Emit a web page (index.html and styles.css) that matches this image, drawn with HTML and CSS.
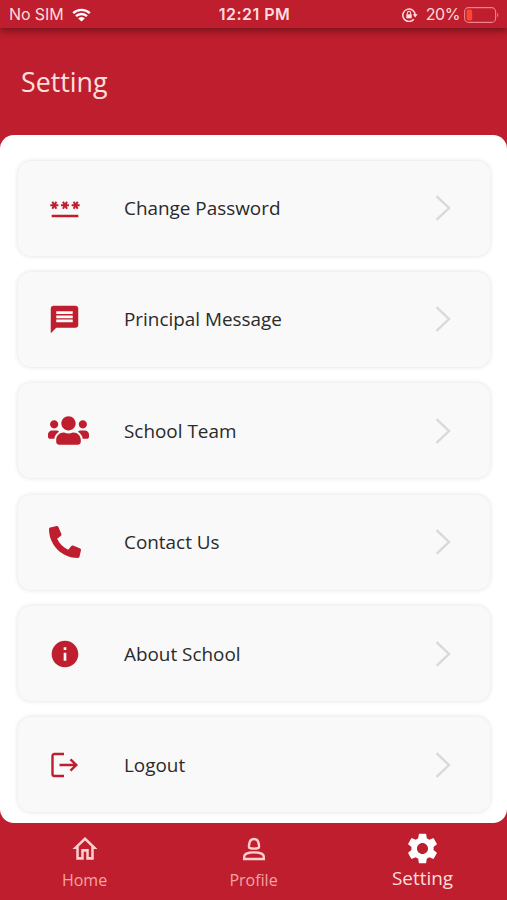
FILE: index.html
```html
<!DOCTYPE html>
<html lang="en">
<head>
    <meta charset="UTF-8">
    <title>Setting</title>
    <link rel="stylesheet" href="styles.css">
</head>
<body>
    <!-- Status bar -->
    <div class="status-bar">
        <div class="status-left">
            <span>No SIM</span>
            <svg class="wifi" viewBox="0 0 19 14">
                <path d="M1.2 5.2a12 12 0 0 1 16.6 0M4 8.2a8 8 0 0 1 11 0" fill="none" stroke="currentColor" stroke-width="2.4"/>
                <path d="M9.5 13.6L6.2 10.4a5 5 0 0 1 6.6 0z" fill="currentColor"/>
            </svg>
        </div>
        <span class="status-time">12:21 PM</span>
        <div class="status-right">
            <svg class="lock" viewBox="0 0 16 14">
                <path d="M11.8 11.200A6.200 6.200 0 1 1 13.200 7" fill="none" stroke="currentColor" stroke-width="1.5"/>
                <path d="M10.800 6.200h4.800L13.200 9.400z" fill="currentColor"/>
                <path d="M4.300 6.300h5.400v4H4.300z" fill="currentColor"/>
                <path d="M5.400 6.500V5a1.600 1.600 0 0 1 3.200 0v1.500" fill="none" stroke="currentColor" stroke-width="1.100"/>
            </svg>
            <span class="percent">20%</span>
            <svg class="battery" viewBox="0 0 36 16">
                <rect x="0.6" y="0.6" width="31" height="14.8" rx="4" fill="none" stroke="#e8848a" stroke-width="1.1"/>
                <rect x="2.6" y="2.6" width="5.6" height="10.8" rx="1.6" fill="#ff4534"/>
                <path d="M33.2 5.4q2.2 2.6 0 5.2z" fill="#e8848a"/>
            </svg>
        </div>
    </div>

    <header class="header">
        <h1>Setting</h1>
    </header>

    <!-- Menu -->
    <main class="panel">
        <a class="card">
            <span class="card-icon">
                <svg width="32" height="32" viewBox="0 0 24 24"><path d="M2 17h20v2H2zM3.15 12.95L4 11.47l.85 1.48 1.3-.75-.85-1.48H7v-1.5H5.3l.85-1.47L4.85 7 4 8.47 3.15 7l-1.3.75.85 1.47H1v1.5h1.7l-.85 1.48zM9.85 12.2l1.3.75.85-1.48.85 1.48 1.3-.75-.85-1.48H15v-1.5h-1.7l.85-1.47-1.3-.75L12 8.47 11.15 7l-1.3.75.85 1.47H9v1.5h1.7zM23 9.22h-1.7l.85-1.47-1.3-.75L20 8.47 19.15 7l-1.3.75.85 1.47H17v1.5h1.7l-.85 1.48 1.3.75.85-1.48.85 1.48 1.3-.75-.85-1.48H23z"/></svg>
            </span>
            <span class="card-label">Change Password</span>
            <svg class="chevron" viewBox="0 0 16 26"><path d="M1.5 1.2L14 13 1.5 24.8"/></svg>
        </a>
        <a class="card">
            <span class="card-icon">
                <svg width="33" height="33" viewBox="0 0 24 24"><path d="M20 2H4c-1.1 0-1.99.9-1.99 2L2 22l4-4h14c1.1 0 2-.9 2-2V4c0-1.1-.9-2-2-2zM6 9h12v2H6V9zm12 5H6v-2h12v2zm0-6H6V6h12v2z"/></svg>
            </span>
            <span class="card-label">Principal Message</span>
            <svg class="chevron" viewBox="0 0 16 26"><path d="M1.5 1.2L14 13 1.5 24.8"/></svg>
        </a>
        <a class="card">
            <span class="card-icon team">
                <svg width="41" height="33" viewBox="0 0 640 512"><path d="M96 224c35.300 0 64-28.700 64-64s-28.700-64-64-64-64 28.700-64 64 28.700 64 64 64zm448 0c35.300 0 64-28.700 64-64s-28.700-64-64-64-64 28.700-64 64 28.700 64 64 64zm32 32h-64c-17.600 0-33.500 7.100-45.100 18.600 40.300 22.100 68.900 62 75.100 109.400h66c17.700 0 32-14.300 32-32v-32c0-35.300-28.700-64-64-64zm-256 0c61.900 0 112-50.100 112-112S381.900 32 320 32 208 82.100 208 144s50.100 112 112 112zm76.800 32h-8.300c-20.800 10-43.900 16-68.500 16s-47.600-6-68.500-16h-8.300C179.600 288 128 339.600 128 403.200V432c0 26.500 21.500 48 48 48h288c26.500 0 48-21.500 48-48v-28.800c0-63.600-51.600-115.200-115.200-115.200zm-223.700-13.400C161.500 263.100 145.600 256 128 256H64c-35.300 0-64 28.700-64 64v32c0 17.700 14.300 32 32 32h65.900c6.300-47.400 34.900-87.300 75.200-109.400z"/></svg>
            </span>
            <span class="card-label">School Team</span>
            <svg class="chevron" viewBox="0 0 16 26"><path d="M1.5 1.2L14 13 1.5 24.8"/></svg>
        </a>
        <a class="card">
            <span class="card-icon">
                <svg width="32" height="32" viewBox="0 0 512 512"><path transform="matrix(-1 0 0 1 512 0)" d="M493.400 24.600l-104-24c-11.300-2.600-22.900 3.300-27.500 13.900l-48 112c-4.200 9.800-1.400 21.300 6.900 28l60.600 49.600c-36 76.700-98.900 140.500-177.200 177.200l-49.600-60.600c-6.800-8.300-18.200-11.100-28-6.900l-112 48C3.900 366.500-2 378.100.6 389.400l24 104C27.100 504.200 36.700 512 48 512c256.100 0 464-207.500 464-464 0-11.200-7.700-20.900-18.600-23.400z"/></svg>
            </span>
            <span class="card-label">Contact Us</span>
            <svg class="chevron" viewBox="0 0 16 26"><path d="M1.5 1.2L14 13 1.5 24.8"/></svg>
        </a>
        <a class="card">
            <span class="card-icon">
                <svg width="32" height="32" viewBox="0 0 24 24"><path d="M12 2C6.480 2 2 6.480 2 12s4.480 10 10 10 10-4.480 10-10S17.520 2 12 2zm1 15h-2v-6h2v6zm0-8h-2V7h2v2z"/></svg>
            </span>
            <span class="card-label">About School</span>
            <svg class="chevron" viewBox="0 0 16 26"><path d="M1.5 1.2L14 13 1.5 24.8"/></svg>
        </a>
        <a class="card">
            <span class="card-icon">
                <svg width="32" height="32" viewBox="0 0 32 32"><path class="line" d="M15 5H5.500q-2 0-2 2v18q0 2 2 2H15M10.500 16h16M21.500 10.300l5.800 5.700-5.800 5.700"/></svg>
            </span>
            <span class="card-label">Logout</span>
            <svg class="chevron" viewBox="0 0 16 26"><path d="M1.5 1.2L14 13 1.5 24.8"/></svg>
        </a>
    </main>

    <!-- Bottom navigation -->
    <nav class="tab-bar">
        <a class="tab">
            <svg width="30" height="32" viewBox="0 0 24 24" preserveAspectRatio="none"><path d="M12 5.690l5 4.500V18h-2v-6H9v6H7v-7.810l5-4.500M12 3L2 12h3v8h6v-6h2v6h6v-8h3L12 3z"/></svg>
            <span>Home</span>
        </a>
        <a class="tab">
            <svg width="32" height="32" viewBox="0 0 32 32"><path class="line" d="M11.300 14.800Q10.600 13.500 11.300 11C11.600 7.700 13.500 6 16 6s4.400 1.700 4.700 5Q21.400 13.500 20.700 14.800Q16 16.400 11.300 14.800zM6.200 26v-2.500C6.200 18 25.800 18 25.800 23.500V26z"/></svg>
            <span>Profile</span>
        </a>
        <a class="tab active">
            <svg width="37" height="37" viewBox="0 0 24 24"><path d="M19.140 12.940c.04-.3.06-.61.06-.94 0-.32-.02-.64-.07-.94l2.030-1.580c.18-.14.23-.41.12-.61l-1.920-3.320c-.12-.22-.37-.29-.59-.22l-2.390.96c-.5-.38-1.030-.7-1.620-.94l-.36-2.540c-.04-.24-.24-.41-.48-.41h-3.840c-.24 0-.43.17-.47.41l-.36 2.540c-.59.24-1.130.57-1.620.94l-2.390-.96c-.22-.08-.47 0-.59.22L2.740 8.870c-.12.21-.08.47.12.61l2.030 1.580c-.05.3-.09.63-.09.94s.02.64.07.94l-2.030 1.580c-.18.14-.23.41-.12.61l1.920 3.320c.12.22.37.29.59.22l2.390-.96c.5.38 1.030.7 1.620.94l.36 2.540c.05.24.24.41.48.41h3.840c.24 0 .44-.17.47-.41l.36-2.540c.59-.24 1.130-.56 1.620-.94l2.390.96c.22.08.47 0 .59-.22l1.920-3.320c.12-.22.07-.47-.12-.61l-2.010-1.580zM12 15.600c-1.980 0-3.600-1.620-3.600-3.600s1.620-3.600 3.600-3.600 3.600 1.620 3.600 3.600-1.620 3.600-3.600 3.600z"/></svg>
            <span>Setting</span>
        </a>
    </nav>
</body>
</html>
```
FILE: styles.css
```css
* {
    box-sizing: border-box;
}

body {
    display: flex;
    flex-direction: column;
    height: 900px;
    margin: 0;
    overflow: hidden;
    background-color: #be1e2d;
    font-family: "Open Sans", sans-serif;
}

svg {
    display: block;
    flex: none;
}

/* Status bar */
.status-bar {
    display: grid;
    grid-template-columns: 1fr auto 1fr;
    align-items: center;
    height: 28px;
    padding: 0 8px 0 9px;
    color: #ffdcdc;
    font-family: Inter, sans-serif;
    font-size: 16px;
    line-height: 29px;
    box-shadow: 0 3px 7px rgba(70, 10, 15, 0.6);
}

.status-left,
.status-right {
    display: flex;
    align-items: center;
}

.status-left {
    gap: 8px;
}

.status-left span {
    letter-spacing: -0.1px;
}

.status-right {
    justify-content: flex-end;
    margin-right: -1px;
}

.status-time {
    padding-left: 1px;
    font-weight: 600;
    letter-spacing: 0.5px;
}

.percent {
    margin-right: 4px;
    letter-spacing: -0.4px;
}

.wifi {
    width: 19px;
    height: 14px;
    color: #fff;
}

.lock {
    width: 16px;
    height: 14px;
    margin-right: 8px;
}

.battery {
    width: 36px;
    height: 16px;
}

/* Header */
.header {
    display: flex;
    align-items: center;
    height: 107px;
    padding-left: 21px;
}

.header h1 {
    margin: 0;
    color: #ffe0dd;
    font-size: 26.8px;
    font-weight: 400;
}

/* Menu */
.panel {
    display: flex;
    flex-direction: column;
    gap: 16.4px;
    height: 688px;
    padding: 25.5px 17px 0 18px;
    background-color: #fff;
    border-radius: 14px;
}

.card {
    display: flex;
    align-items: center;
    height: 95px;
    padding: 0 39px 0 25px;
    background-color: #f9f9f9;
    border-radius: 13px;
    box-shadow: 0 0 5px rgba(0, 0, 0, 0.13);
}

.card-icon {
    display: flex;
    justify-content: center;
    width: 43px;
    margin-right: 38px;
    fill: #be1e2d;
}

.card-icon.team {
    width: 51px;
    margin-right: 30px;
}

.line {
    fill: none;
    stroke: #be1e2d;
    stroke-width: 2.4;
}

.card-label {
    flex: 1;
    color: #2a2a2a;
    font-size: 18.9px;
}

.chevron {
    width: 16px;
    height: 26px;
    fill: none;
    stroke: #d9d9d9;
    stroke-width: 2.4;
}

/* Bottom navigation */
.tab-bar {
    display: flex;
    height: 77px;
}

.tab {
    display: flex;
    flex: 1;
    flex-direction: column;
    align-items: center;
    padding-top: 10px;
    color: #f6a3a5;
    font-size: 16px;
    line-height: 22px;
}

.tab svg {
    fill: #ffcfcd;
}

.tab .line {
    fill: none;
    stroke: #ffcfcd;
}

.tab span {
    margin-top: 4px;
}

.tab.active {
    padding-top: 7px;
    color: #ffdedb;
    font-size: 18.9px;
}

.tab.active svg {
    fill: #fff;
}

.tab.active span {
    margin-top: 0;
}
```
